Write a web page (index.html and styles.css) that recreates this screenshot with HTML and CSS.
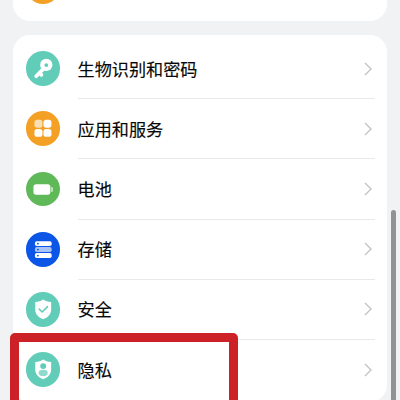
FILE: index.html
```
<!DOCTYPE html>
<html lang="zh-CN">
<head>
<meta charset="utf-8">
<title>设置</title>
<link rel="stylesheet" href="styles.css">
</head>
<body>
<main class="screen">
  <section class="card card-previous"><span class="icon orange"></span></section>
  <section class="card card-main">
    <div class="row">
      <svg class="icon teal" viewBox="0 0 35 35"><path d="M19 16.500 10.200 25.400M13.500 22l2 2" stroke="#fff" stroke-width="3.700" stroke-linecap="round"/><circle cx="20.400" cy="14" r="6.200" fill="#fff"/><circle cx="20.400" cy="14.100" r="1.900" fill="#61cdb9"/></svg>
      <span class="label">生物识别和密码</span>
      <svg class="chevron" viewBox="0 0 8 14"><path d="m1 1 6 6-6 6"/></svg>
    </div>
    <div class="row">
      <svg class="icon orange" viewBox="0 0 35 35"><g fill="#fff"><rect x="8.500" y="8.900" width="8" height="8" rx="2.700" opacity=".66"/><rect x="17.600" y="8.900" width="8" height="8" rx="2.700"/><rect x="8.500" y="18" width="8" height="8" rx="2.700"/><rect x="17.600" y="18" width="8" height="8" rx="2.700"/></g></svg>
      <span class="label">应用和服务</span>
      <svg class="chevron" viewBox="0 0 8 14"><path d="m1 1 6 6-6 6"/></svg>
    </div>
    <div class="row">
      <svg class="icon green" viewBox="0 0 35 35"><rect x="7.500" y="12.200" width="17" height="10.600" rx="2.700" fill="#fff"/><path d="M25.400 15.200c1.300 0 1.600.6 1.600 1.500v1.800c0 .9-.3 1.500-1.600 1.500z" fill="#fff" opacity=".75"/></svg>
      <span class="label">电池</span>
      <svg class="chevron" viewBox="0 0 8 14"><path d="m1 1 6 6-6 6"/></svg>
    </div>
    <div class="row">
      <svg class="icon blue" viewBox="0 0 35 35"><g fill="#fff"><rect x="9" y="9.200" width="16.800" height="5" rx="1.800"/><rect x="9" y="15.200" width="16.800" height="5" rx="1.800" opacity=".65"/><rect x="9" y="21.200" width="16.800" height="5" rx="1.800"/></g><g fill="#0b55e7"><circle cx="12" cy="11.700" r=".9"/><circle cx="12" cy="17.700" r=".9"/><circle cx="12" cy="23.700" r=".9"/></g></svg>
      <span class="label">存储</span>
      <svg class="chevron" viewBox="0 0 8 14"><path d="m1 1 6 6-6 6"/></svg>
    </div>
    <div class="row">
      <svg class="icon teal" viewBox="0 0 35 35"><path d="M17.300 7.500c2.300 1.600 4.700 2.400 8 2.600v7.400c0 4.800-3.400 8-8 9.900-4.600-1.900-8-5.100-8-9.900v-7.400c3.300-.2 5.700-1 8-2.600z" fill="#fff"/><path d="m13.300 17.200 3 3 5.300-5.500" fill="none" stroke="#61cdb9" stroke-width="1.500" stroke-linecap="round" stroke-linejoin="round"/></svg>
      <span class="label">安全</span>
      <svg class="chevron" viewBox="0 0 8 14"><path d="m1 1 6 6-6 6"/></svg>
    </div>
    <div class="row">
      <svg class="icon teal" viewBox="0 0 35 35"><path d="M17.300 7.500c2.300 1.600 4.700 2.400 8 2.600v7.400c0 4.800-3.400 8-8 9.900-4.600-1.900-8-5.100-8-9.900v-7.400c3.300-.2 5.700-1 8-2.600z" fill="#fff"/><circle cx="17.300" cy="14.200" r="3" fill="#61cdb9"/><ellipse cx="17.300" cy="21" rx="4.600" ry="3.100" fill="#8edbce"/></svg>
      <span class="label">隐私</span>
      <svg class="chevron" viewBox="0 0 8 14"><path d="m1 1 6 6-6 6"/></svg>
    </div>
  </section>
  <div class="highlight"></div>
  <div class="scrollbar"></div>
</main>
</body>
</html>
```
FILE: styles.css
```
* { box-sizing: border-box; }
body { margin: 0; font-family: "Noto Sans CJK SC", sans-serif; }
.screen {
  position: relative;
  height: 400px;
  overflow: hidden;
  padding: 0 13px;
  background: #f1f2f4;
}
.card { background: #fff; border-radius: 17px; }
.card-previous {
  display: flex;
  align-items: flex-end;
  height: 21px;
  margin-bottom: 14px;
  padding: 0 12.5px 17px;
  border-radius: 0 0 17px 17px;
}
.card-main { height: 367px; padding: 3.6px 12.5px 0; }
.row {
  position: relative;
  display: flex;
  align-items: center;
  height: 60.2px;
}
.row + .row::before {
  content: "";
  position: absolute;
  top: -0.6px;
  left: 52px;
  right: 0;
  height: 1px;
  background: #e9e9ea;
}
.icon { flex: none; width: 34.8px; height: 34.8px; border-radius: 50%; }
.teal { background: #61cdb9; }
.orange { background: #f4a024; }
.green { background: #60b958; }
.blue { background: #0b55e7; }
.label {
  flex: 1;
  margin-left: 17.2px;
  color: #080808;
  font-size: 17.15px;
  line-height: 24px;
  -webkit-text-stroke: 0.15px #080808;
}
.chevron { width: 8px; height: 14px; margin-right: 2.8px; overflow: visible; }
.chevron path { fill: none; stroke: #c3c3c4; stroke-width: 1.4; }
.highlight {
  position: absolute;
  left: 10px;
  top: 333px;
  width: 228px;
  height: 90px;
  border: 9.5px solid #cb2127;
  border-radius: 5px;
}
.scrollbar {
  position: absolute;
  left: 391px;
  top: 210px;
  width: 5px;
  height: 210px;
  border-radius: 3px;
  background: #919293;
}
```
